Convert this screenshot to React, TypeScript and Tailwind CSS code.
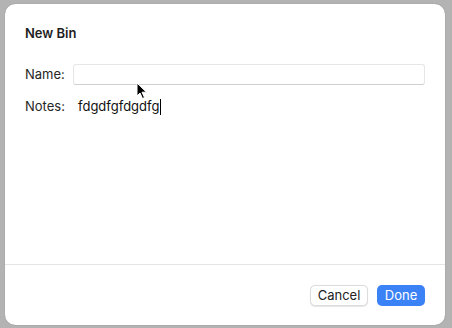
import React from "react";

const font = { fontFamily: '"Inter", "Liberation Sans", sans-serif' };

export default function App() {
  return (
    <div
      className="relative h-[328px] w-[452px] overflow-hidden bg-[#b3b3b3] pl-[5px] pr-[7px] pt-[4px] pb-[3px]"
      style={font}
    >
      <div className="h-[321px] w-[440px] flex flex-col rounded-[10px] bg-white shadow-[0_0_1px_rgba(0,0,0,0.4)]">
        {/* body */}
        <div className="flex-1 px-[20px] pt-[21px]">
          <div className="text-[13px] font-semibold leading-[16px] text-[#1e1e1e]">New Bin</div>

          <div className="mt-[23px] flex items-center">
            <span className="w-[48px] text-[13px] text-[#262626]">Name:</span>
            <div className="h-[21px] w-[352px] rounded-[3px] border border-[#e6e6e6] border-b-[#cfcfcf] bg-white" />
          </div>

          <div className="mt-[12px] flex items-center">
            <span className="w-[53px] text-[13px] text-[#262626]">Notes:</span>
            <span className="text-[13px] text-[#111]">fdgdfgfdgdfg</span>
            <span className="ml-[1px] h-[16px] w-[1px] bg-black" />
          </div>
        </div>

        {/* footer */}
        <div className="h-[61px] border-t border-[#e5e5e5] flex items-start justify-end gap-[9px] pr-[20px] pt-[20px]">
          <button className="h-[21px] w-[58px] rounded-[5px] border border-[#dcdcdc] bg-white text-[13px] leading-[19px] text-[#222] shadow-[0_0.5px_1px_rgba(0,0,0,0.1)]">
            Cancel
          </button>
          <button className="h-[21px] w-[48px] rounded-[5px] bg-[#3b82f6] text-[13px] leading-[21px] text-white">
            Done
          </button>
        </div>
      </div>

      {/* mouse pointer */}
      <svg className="absolute left-[136px] top-[82px]" width="12" height="18" viewBox="0 0 12 18">
        <path d="M1 1 L1 14 L4 11 L6.5 16.5 L8.5 15.5 L6 10.2 L10.5 10.2 Z" fill="#000" stroke="#fff" strokeWidth="1" />
      </svg>
    </div>
  );
}
